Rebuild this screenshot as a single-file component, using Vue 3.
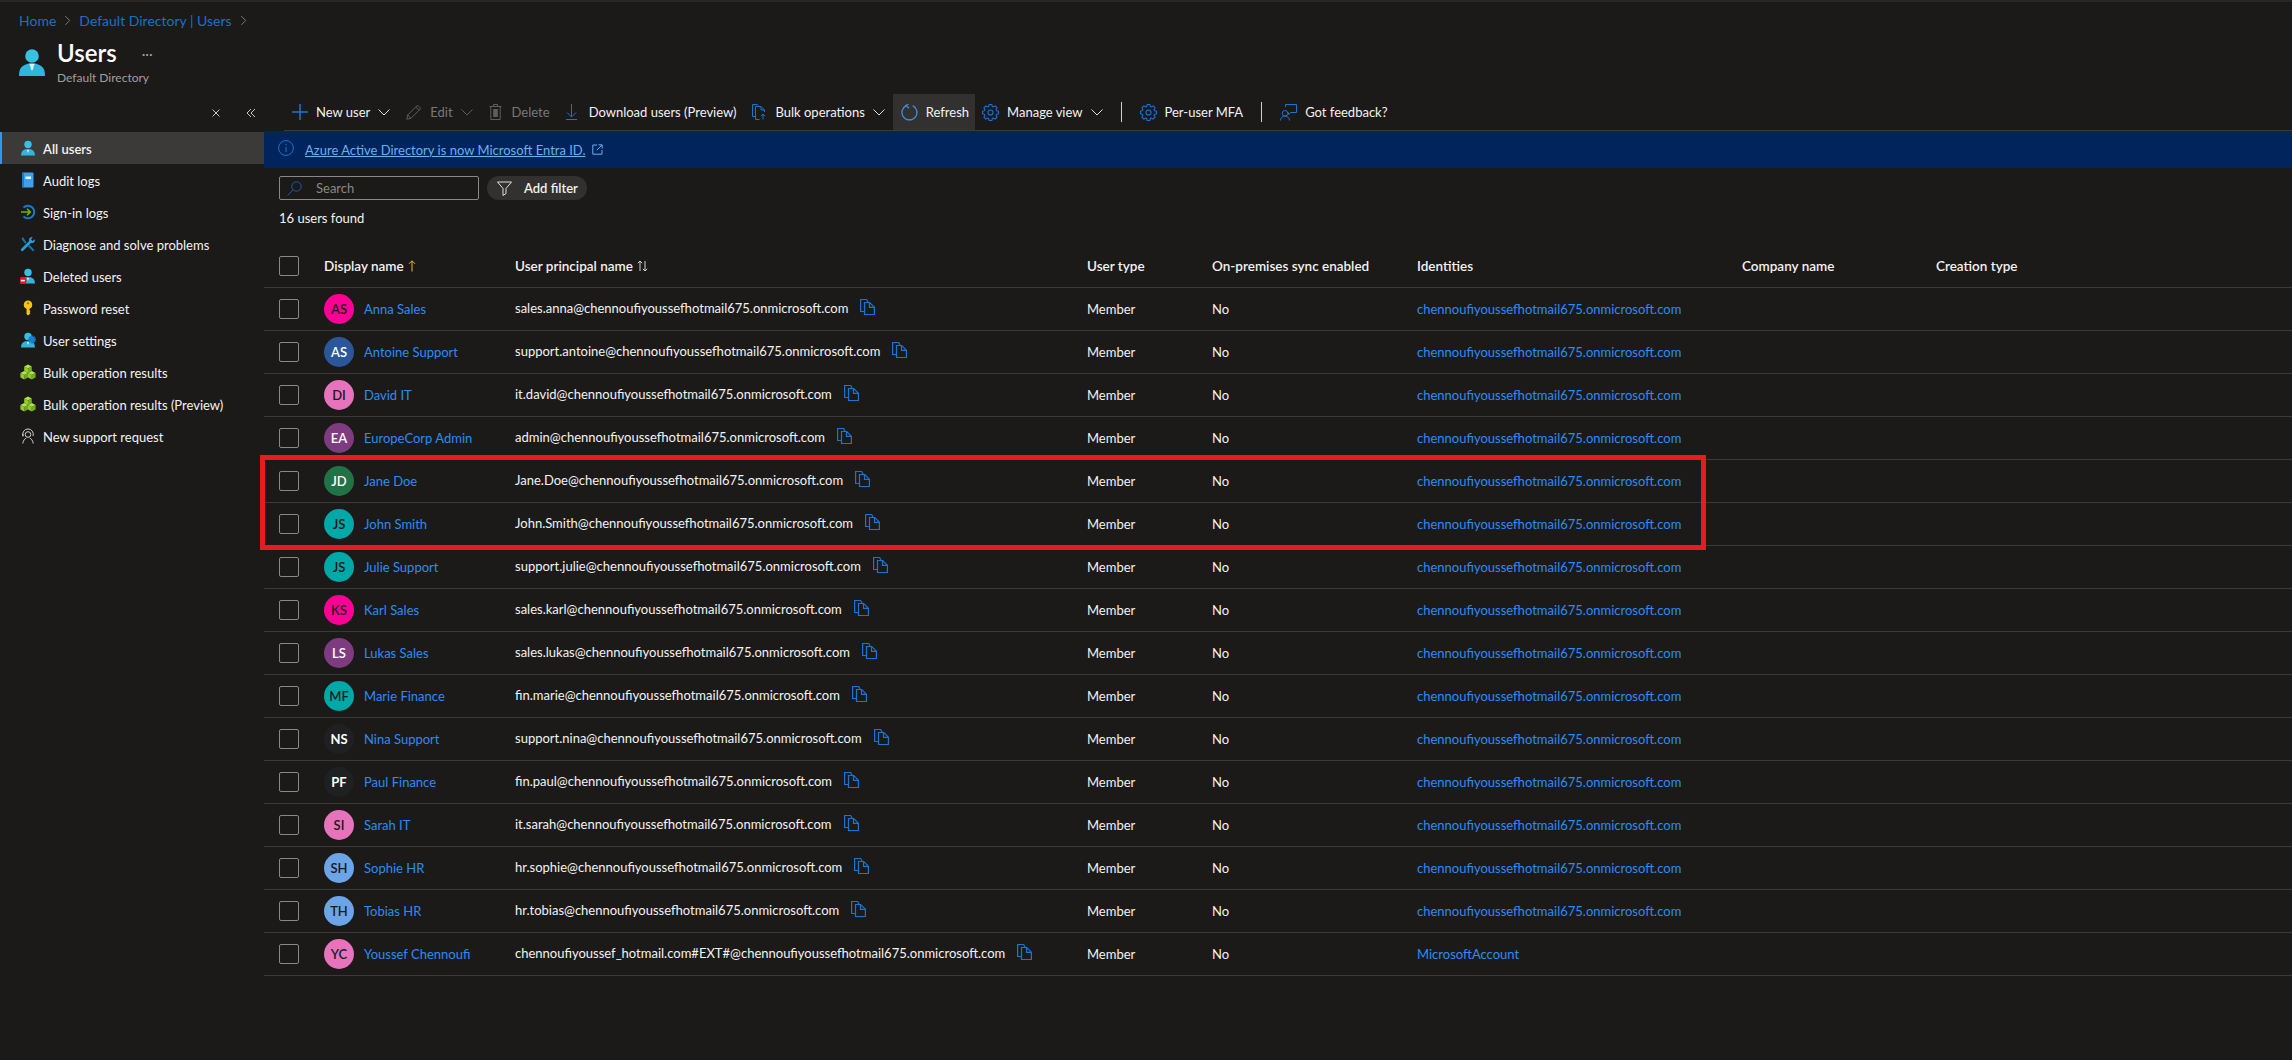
<script setup>
const navItems = [
  { label: 'All users', icon: 'user', active: true },
  { label: 'Audit logs', icon: 'book' },
  { label: 'Sign-in logs', icon: 'signin' },
  { label: 'Diagnose and solve problems', icon: 'tools' },
  { label: 'Deleted users', icon: 'deleted' },
  { label: 'Password reset', icon: 'key' },
  { label: 'User settings', icon: 'usercog' },
  { label: 'Bulk operation results', icon: 'cubes' },
  { label: 'Bulk operation results (Preview)', icon: 'cubes' },
  { label: 'New support request', icon: 'support' }
]

const domain = 'chennoufiyoussefhotmail675.onmicrosoft.com'

const users = [
  { av: 'AS', tone: 'pink', name: 'Anna Sales', upn: 'sales.anna' },
  { av: 'AS', tone: 'blue', name: 'Antoine Support', upn: 'support.antoine' },
  { av: 'DI', tone: 'rose', name: 'David IT', upn: 'it.david' },
  { av: 'EA', tone: 'purple', name: 'EuropeCorp Admin', upn: 'admin' },
  { av: 'JD', tone: 'green', name: 'Jane Doe', upn: 'Jane.Doe' },
  { av: 'JS', tone: 'teal', name: 'John Smith', upn: 'John.Smith' },
  { av: 'JS', tone: 'teal', name: 'Julie Support', upn: 'support.julie' },
  { av: 'KS', tone: 'pink', name: 'Karl Sales', upn: 'sales.karl' },
  { av: 'LS', tone: 'purple', name: 'Lukas Sales', upn: 'sales.lukas' },
  { av: 'MF', tone: 'teal', name: 'Marie Finance', upn: 'fin.marie' },
  { av: 'NS', tone: 'dark', name: 'Nina Support', upn: 'support.nina' },
  { av: 'PF', tone: 'dark', name: 'Paul Finance', upn: 'fin.paul' },
  { av: 'SI', tone: 'rose', name: 'Sarah IT', upn: 'it.sarah' },
  { av: 'SH', tone: 'sky', name: 'Sophie HR', upn: 'hr.sophie' },
  { av: 'TH', tone: 'sky', name: 'Tobias HR', upn: 'hr.tobias' },
  { av: 'YC', tone: 'rose', name: 'Youssef Chennoufi', upn: 'chennoufiyoussef_hotmail.com#EXT#', identity: 'MicrosoftAccount' }
]

// 8 tooth gear outline in a 16x16 box
const gearPath = (() => {
  const pts = []
  for (let i = 0; i < 8; i++) {
    const a = (i * Math.PI) / 4
    for (const [r, d] of [[5.9, -0.3], [7.6, -0.17], [7.6, 0.17], [5.9, 0.3]]) {
      pts.push(`${(8 + r * Math.cos(a + d)).toFixed(2)} ${(8 + r * Math.sin(a + d)).toFixed(2)}`)
    }
  }
  return 'M' + pts.join('L') + 'Z'
})()

const cubes = [[4.2, 0.6], [0.4, 7], [8, 7]]
</script>

<template>
  <div class="page">
    <header class="top">
      <nav class="crumbs">
        <a>Home</a>
        <svg class="crumb-chev" viewBox="0 0 8 12"><path d="M1.5 1l5 5-5 5" /></svg>
        <a>Default Directory | Users</a>
        <svg class="crumb-chev" viewBox="0 0 8 12"><path d="M1.5 1l5 5-5 5" /></svg>
      </nav>
      <div class="heading">
        <svg class="heading-icon" viewBox="0 0 26 28">
          <circle cx="13" cy="8" r="6.8" fill="#35c0e4" />
          <path d="M0 28c0-1 0-4 1-6.500 1-3 5-5 8.500-6l3.500 2 3.500-2c3.500 1 7.500 3 8.500 6 1 2.500 1 5.500 1 6.500z" fill="#2fb6dc" />
          <path d="M10 15.500h6l-1.500 3 0 1.500-1.500 3-1.500-3 0-1.500z" fill="#d8f2fa" />
        </svg>
        <div class="heading-text">
          <div class="title-line">
            <h1>Users</h1>
            <span class="dots">···</span>
          </div>
          <div class="subtitle">Default Directory</div>
        </div>
      </div>
    </header>

    <div class="body">
      <aside class="side">
        <div class="side-tools">
          <svg class="side-tool" viewBox="0 0 10 10"><path d="M1.500 1.500l7 7M8.500 1.500l-7 7" /></svg>
          <svg class="side-tool" viewBox="0 0 10 10"><path d="M5 1L1 5l4 4M9 1L5 5l4 4" /></svg>
        </div>
        <ul class="side-list">
          <li v-for="item in navItems" :key="item.label" class="side-item" :class="{ active: item.active }">
            <svg class="nav-icon" viewBox="0 0 16 16">
              <g v-if="['user', 'deleted', 'usercog'].includes(item.icon)">
                <circle cx="8" cy="4.500" r="3.700" fill="#35c0e4" />
                <path d="M1 15.500c0-3.500 1.500-5.500 4.800-6.500L8 10.200 10.200 9c3.300 1 4.800 3 4.800 6.500z" fill="#2fb6dc" />
                <path d="M6.700 9.500h2.600L8 13z" fill="#d8f2fa" />
              </g>
              <g v-if="item.icon === 'deleted'">
                <circle cx="2.800" cy="12.600" r="3.800" fill="#e81123" />
                <rect x="0.800" y="11.800" width="4" height="1.600" fill="#fff" />
              </g>
              <path
                v-if="item.icon === 'usercog'"
                transform="translate(8 3.500) scale(.5)"
                :d="gearPath"
                fill="#1a7fd0"
                stroke="#1a7fd0"
              />
              <g v-if="item.icon === 'book'">
                <rect x="2" y="0.500" width="11.500" height="15" rx="1" fill="#3f9fea" />
                <rect x="2" y="0.500" width="2" height="15" rx="1" fill="#1f78c8" />
                <rect x="5.500" y="4.500" width="5.500" height="2.500" fill="#e8f4fc" />
              </g>
              <g v-if="item.icon === 'signin'">
                <path d="M3.500 3.500a6.300 6.300 0 1 1 0 9" fill="none" stroke="#1679c9" stroke-width="2" />
                <path d="M1 8h9M7 4.800L10.300 8 7 11.200" fill="none" stroke="#6bb700" stroke-width="1.600" />
              </g>
              <g v-if="item.icon === 'tools'">
                <path d="M3 1l3.500 5.500-1.300 1.300L1.500 3z" fill="#1b6fa8" />
                <path d="M12.800 1.200a3 3 0 0 0-3.700 3.900L1.300 12.800a1.300 1.300 0 0 0 1.900 1.900l7.700-7.800a3 3 0 0 0 3.900-3.700L12.700 5 11 3.300z" fill="#2a9bd8" />
                <path d="M9.500 9l5 5-1.500 1.500-5-5z" fill="#1b6fa8" />
              </g>
              <g v-if="item.icon === 'key'">
                <path d="M8 .5a4.300 4.300 0 0 1 1.500 8.300v1.400l1 1-1 1 1 1-2.500 2.300-1.500-1.500V8.800A4.300 4.300 0 0 1 8 .5z" fill="#f8c21c" />
                <circle cx="8" cy="3.200" r="1" fill="#8a6a00" />
              </g>
              <g v-if="item.icon === 'cubes'">
                <g v-for="(p, n) in cubes" :key="n" :transform="`translate(${p[0]} ${p[1]})`">
                  <path d="M3.800 0l3.800 2-3.800 2L0 2z" fill="#b5e051" />
                  <path d="M0 2l3.800 2v4.400L0 6.400z" fill="#8fca2e" />
                  <path d="M7.600 2L3.800 4v4.400l3.800-2z" fill="#6fae1c" />
                </g>
              </g>
              <g v-if="item.icon === 'support'" fill="none" stroke="#d2d0ce" stroke-width="1">
                <circle cx="8" cy="6.500" r="2.800" />
                <path d="M2.800 15.500c.3-3 2-4.800 3.500-5.500M13.200 15.500c-.3-3-2-4.800-3.500-5.500" />
                <path d="M3 8a5.300 5.300 0 1 1 10 0" />
                <path d="M3 5.500V8.500" />
              </g>
            </svg>
            <span class="side-label">{{ item.label }}</span>
          </li>
        </ul>
      </aside>

      <main class="main">
        <div class="toolbar">
          <button class="tool">
            <svg class="ti plus" viewBox="0 0 16 16"><path d="M8 0v16M0 8h16" /></svg>
            <span>New user</span>
            <svg class="chev" viewBox="0 0 12 8"><path d="M.5 1.500L6 7l5.500-5.500" /></svg>
          </button>
          <button class="tool off">
            <svg class="ti pencil" viewBox="0 0 16 16"><path d="M11.500 1.200l3.300 3.300L5 14.300.8 15.200l.9-4.200zM9.800 3l3.200 3.200M1.700 11l3.300 3.300" /></svg>
            <span>Edit</span>
            <svg class="chev" viewBox="0 0 12 8"><path d="M.5 1.500L6 7l5.500-5.500" /></svg>
          </button>
          <button class="tool off">
            <svg class="ti trash" viewBox="0 0 13 16"><path d="M.5 2.500h12M4.500 2.500V.5h4v2M1.800 2.500v13h9.400v-13" /><path class="fill" d="M4.200 5h4.600v8H4.200z" /></svg>
            <span>Delete</span>
          </button>
          <button class="tool">
            <svg class="ti down" viewBox="0 0 11 16"><path d="M5.500 0v12.500M1 8.500l4.500 4.500L10 8.500M0 15.500h11" /></svg>
            <span>Download users (Preview)</span>
          </button>
          <button class="tool">
            <svg class="ti bulk" viewBox="0 0 15 16"><path d="M3.500 12.500H.5V.5h5l1 1M3.500 15.500V2.500h5.500l3.500 3.500v2M3.500 15.500h4M11 15.500V10M8.800 12.200L11 10l2.200 2.200M9 2.500V6h3.500" /></svg>
            <span>Bulk operations</span>
            <svg class="chev" viewBox="0 0 12 8"><path d="M.5 1.500L6 7l5.500-5.500" /></svg>
          </button>
          <button class="tool hover">
            <svg class="ti refresh" viewBox="0 0 17 17"><path d="M5.200 1.600a7.500 7.500 0 1 0 6.500 0M8 4.400L5 1.500 7.500.2" /></svg>
            <span>Refresh</span>
          </button>
          <button class="tool after-hover">
            <svg class="ti gear" viewBox="0 0 16 16"><path :d="gearPath" /><circle cx="8" cy="8" r="2.400" /></svg>
            <span>Manage view</span>
            <svg class="chev" viewBox="0 0 12 8"><path d="M.5 1.500L6 7l5.500-5.500" /></svg>
          </button>
          <span class="sep"></span>
          <button class="tool">
            <svg class="ti gear" viewBox="0 0 16 16"><path :d="gearPath" /><circle cx="8" cy="8" r="2.400" /></svg>
            <span>Per-user MFA</span>
          </button>
          <span class="sep"></span>
          <button class="tool">
            <svg class="ti feedback" viewBox="0 0 17 17"><path d="M5.500 3V.5h11v8H10.500l-2 2v-2M5 6.500a2.800 2.800 0 1 1 0 5.600 2.800 2.800 0 0 1 0-5.600zM.5 16.500c0-2.500 2-4.500 4.500-4.500s4.500 2 4.500 4.500" /></svg>
            <span>Got feedback?</span>
          </button>
        </div>

        <div class="banner">
          <svg class="info" viewBox="0 0 16 16"><circle cx="8" cy="8" r="7.400" /><path d="M8 7v5M8 4v1.400" /></svg>
          <a class="banner-link">Azure Active Directory is now Microsoft Entra ID.</a>
          <svg class="ext" viewBox="0 0 11 11"><path d="M5 1H.8v9.200H10V6M6.500.8h3.700v3.700M10 1L4.800 6.200" /></svg>
        </div>

        <div class="filters">
          <label class="search">
            <svg viewBox="0 0 15 15"><circle cx="9.500" cy="5.500" r="4.700" /><path d="M6 9L.7 14.300" /></svg>
            <input type="text" placeholder="Search" />
          </label>
          <button class="pill">
            <svg viewBox="0 0 15 15"><path d="M.5 1h14L9 7.500v5l-3 2v-7z" /></svg>
            <span>Add filter</span>
          </button>
        </div>
        <div class="found">16 users found</div>

        <div class="row head">
          <span class="check"></span>
          <span class="col-name">Display name <svg class="sort-up" viewBox="0 0 8 12"><path d="M4 11.500V1M1 3.800L4 .8l3 3" /></svg></span>
          <span class="col-upn">User principal name <svg class="sort-both" viewBox="0 0 11 12"><path d="M3 11V1M.8 3.200L3 1l2.200 2.200M8 1v10M5.800 8.800L8 11l2.200-2.200" /></svg></span>
          <span>User type</span>
          <span>On-premises sync enabled</span>
          <span>Identities</span>
          <span>Company name</span>
          <span>Creation type</span>
        </div>

        <div class="rows">
          <div v-for="user in users" :key="user.upn" class="row">
            <span class="check"></span>
            <span class="name-cell">
              <span class="avatar" :class="user.tone">{{ user.av }}</span>
              <a class="link">{{ user.name }}</a>
            </span>
            <span class="upn-cell">
              <span>{{ user.upn }}@{{ domain }}</span>
              <svg class="copy" viewBox="0 0 15 16"><path d="M4.500 12.500H.6V.5h6l1.500 2.500M4.500 3.500h5.200l4.700 4.700v7.300H4.500zM9.500 3.500v4.800h4.800" /></svg>
            </span>
            <span>Member</span>
            <span>No</span>
            <a class="link">{{ user.identity || domain }}</a>
          </div>
          <div class="marker"></div>
        </div>
      </main>
    </div>
  </div>
</template>

<style scoped>
.page {
  min-height: 1060px;
  box-sizing: border-box;
  border-top: 2px solid #292827;
  background: #1b1a19;
  color: #f3f2f1;
  font-family: Lato, "Open Sans", sans-serif;
  font-size: 13px;
  overflow: hidden;
}

.top {
  height: 92px;
  box-sizing: border-box;
  padding: 9px 0 0 19px;
}

.crumbs {
  display: flex;
  align-items: center;
  gap: 8px;
  height: 18px;
  color: #1572c8;
  font-size: 14px;
}

.crumb-chev {
  width: 7px;
  height: 11px;
  fill: none;
  stroke: #8a8886;
}

.heading {
  display: flex;
  gap: 12px;
  margin-top: 8px;
}

.heading-icon {
  width: 26px;
  height: 28px;
  margin-top: 11px;
  flex: none;
}

.title-line {
  display: flex;
  align-items: center;
}

h1 {
  margin: 0;
  font-size: 24px;
  font-weight: 600;
  line-height: 32px;
  color: #fff;
}

.dots {
  margin-left: 25px;
  color: #a19f9d;
  font-size: 14px;
}

.subtitle {
  margin-top: 1px;
  color: #a19f9d;
  font-size: 12px;
  line-height: 16px;
}

.body {
  display: flex;
}

.side {
  width: 264px;
  flex: none;
}

.side-tools {
  display: flex;
  justify-content: flex-end;
  align-items: center;
  gap: 25px;
  height: 38px;
  padding-right: 8px;
}

.side-tool {
  width: 10px;
  height: 10px;
  fill: none;
  stroke: #c8c6c4;
}

.side-list {
  list-style: none;
  margin: 0;
  padding: 0;
}

.side-item {
  display: flex;
  align-items: center;
  gap: 7px;
  height: 32px;
  padding-left: 20px;
}

.side-item.active {
  padding-left: 18px;
  border-left: 2px solid #2899f5;
  background: #3b3a39;
  font-weight: 600;
}

.side-label {
  margin-top: 2px;
}

.nav-icon {
  width: 16px;
  height: 16px;
  flex: none;
}

.main {
  flex: 1;
  min-width: 0;
}

.toolbar {
  display: flex;
  align-items: center;
  height: 36px;
  margin-left: 20px;
  border-bottom: 1px solid #3b3a39;
}

.tool {
  display: flex;
  align-items: center;
  gap: 8px;
  height: 36px;
  padding: 0 8px;
  border: 0;
  background: none;
  color: #f3f2f1;
  font: inherit;
}

.tool.off {
  color: #797775;
}

.tool.hover {
  padding-right: 6px;
  background: #323130;
}

.tool.after-hover {
  padding-left: 7px;
}

.ti {
  flex: none;
  fill: none;
  stroke: #1a74d2;
}

.plus { width: 16px; height: 16px; stroke-width: 1.500; }
.pencil { width: 16px; height: 16px; stroke: #605e5c; }
.trash { width: 13px; height: 16px; stroke: #605e5c; margin-right: 2px; }
.trash .fill { fill: #605e5c; stroke: none; }
.down { width: 11px; height: 16px; margin-right: 4px; }
.bulk { width: 15px; height: 16px; }
.refresh { width: 17px; height: 17px; stroke: #3f8fe0; stroke-width: 1.300; }
.gear { width: 17px; height: 17px; }
.feedback { width: 17px; height: 17px; }

.chev {
  width: 12px;
  height: 8px;
  fill: none;
  stroke: #e1dfdd;
}

.tool.off .chev {
  stroke: #605e5c;
}

.sep {
  width: 1px;
  height: 20px;
  margin: 0 10px;
  background: #d2d0ce;
}

.banner {
  display: flex;
  align-items: center;
  height: 37px;
  padding-left: 14px;
  background: #00245b;
}

.info {
  width: 16px;
  height: 16px;
  fill: none;
  stroke: #1a74d2;
  margin-bottom: 4px;
}

.banner-link {
  margin-left: 11px;
  color: #69b1f0;
  text-decoration: underline;
}

.ext {
  width: 11px;
  height: 11px;
  margin-left: 6px;
  fill: none;
  stroke: #69b1f0;
}

.filters {
  display: flex;
  gap: 8px;
  margin: 8px 0 0 15px;
}

.search {
  display: flex;
  align-items: center;
  gap: 14px;
  width: 200px;
  height: 24px;
  box-sizing: border-box;
  padding-left: 7px;
  border: 1px solid #8a8886;
  border-radius: 2px;
}

.search svg {
  width: 15px;
  height: 15px;
  flex: none;
  fill: none;
  stroke: #1a5fa8;
}

.search input {
  width: 150px;
  padding: 0;
  border: 0;
  outline: 0;
  background: none;
  color: #f3f2f1;
  font: inherit;
}

.search input::placeholder {
  color: #8a8886;
}

.pill {
  display: flex;
  align-items: center;
  gap: 12px;
  height: 24px;
  padding: 0 9px 0 10px;
  border: 0;
  border-radius: 12px;
  background: #323130;
  color: #f3f2f1;
  font: inherit;
  font-weight: 600;
}

.pill svg {
  width: 15px;
  height: 15px;
  fill: none;
  stroke: #e1dfdd;
}

.found {
  height: 36px;
  margin-left: 15px;
  line-height: 36px;
}

.row {
  display: grid;
  grid-template-columns: 60px 191px 572px 125px 205px 325px 194px 1fr;
  align-items: center;
  height: 43px;
  box-sizing: border-box;
  border-bottom: 1px solid #3b3a39;
}

.row.head {
  margin-top: 9px;
  font-size: 13.500px;
  font-weight: 600;
}

.check {
  width: 20px;
  height: 20px;
  margin-left: 15px;
  box-sizing: border-box;
  border: 1px solid #8a8886;
  border-radius: 2px;
}

.sort-up,
.sort-both {
  height: 12px;
  margin-left: 1px;
  vertical-align: -1px;
  fill: none;
}

.sort-up { width: 8px; stroke: #f0b429; }
.sort-both { width: 11px; stroke: #d2d0ce; }

.name-cell {
  display: flex;
  align-items: center;
  gap: 10px;
}

.avatar {
  display: flex;
  align-items: center;
  justify-content: center;
  width: 30px;
  height: 30px;
  border-radius: 50%;
  font-size: 13px;
  font-weight: 600;
  flex: none;
}

.pink { background: #ff0097; color: #1b1a19; }
.blue { background: #2b579a; color: #fff; }
.rose { background: #e773bd; color: #1b1a19; }
.purple { background: #7f3b7f; color: #fff; }
.green { background: #217346; color: #fff; }
.teal { background: #00a8a8; color: #1b1a19; }
.sky { background: #6ba5e7; color: #1b1a19; }
.dark { background: #1f2022; color: #fff; font-weight: 700; }

.link {
  color: #2b8cf5;
}

.upn-cell {
  display: flex;
  align-items: center;
  gap: 12px;
  padding-bottom: 2px;
}

.copy {
  width: 15px;
  height: 16px;
  flex: none;
  fill: none;
  stroke: #1a74d2;
  stroke-width: 1.200;
  margin-bottom: 2px;
}

.rows {
  position: relative;
}

/* annotation drawn over the table */
.marker {
  position: absolute;
  left: -4px;
  top: 167px;
  width: 1446px;
  height: 95px;
  box-sizing: border-box;
  border: 5px solid #e81c1c;
  pointer-events: none;
}
</style>

<style>
html, body {
  margin: 0;
  background: #1b1a19;
}
</style>
